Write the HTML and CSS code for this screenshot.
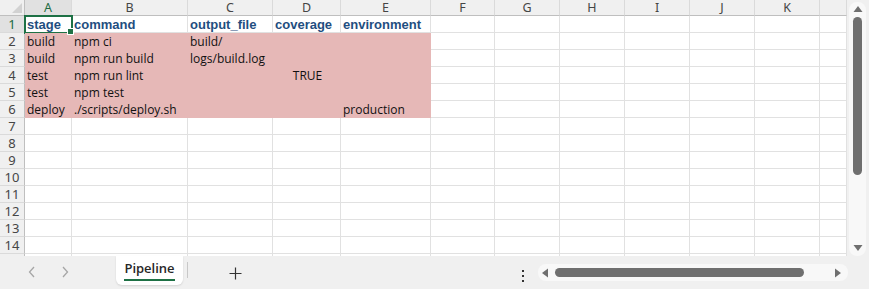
FILE: index.html
```html
<!DOCTYPE html>
<html lang="en">
<head>
    <meta charset="UTF-8">
    <title>Pipeline</title>
    <link rel="stylesheet" href="styles.css">
</head>
<body>
    <div class="sheet">
        <div class="main">
            <div class="grid">
                <!-- column headers -->
                <div class="corner"><span class="tri"></span></div>
                <div class="ch sel">A</div><div class="ch">B</div><div class="ch">C</div><div class="ch">D</div><div class="ch">E</div><div class="ch">F</div><div class="ch">G</div><div class="ch">H</div><div class="ch">I</div><div class="ch">J</div><div class="ch">K</div><div class="ch"></div>

                <div class="rh sel">1</div>
                <div class="c hd active">stage<span class="handle"></span></div><div class="c hd">command</div><div class="c hd">output_file</div><div class="c hd">coverage</div><div class="c hd">environment</div><div class="c"></div><div class="c"></div><div class="c"></div><div class="c"></div><div class="c"></div><div class="c"></div><div class="c"></div>

                <div class="rh">2</div>
                <div class="c f">build</div><div class="c f">npm ci</div><div class="c f">build/</div><div class="c f"></div><div class="c f"></div><div class="c"></div><div class="c"></div><div class="c"></div><div class="c"></div><div class="c"></div><div class="c"></div><div class="c"></div>

                <div class="rh">3</div>
                <div class="c f">build</div><div class="c f">npm run build</div><div class="c f">logs/build.log</div><div class="c f"></div><div class="c f"></div><div class="c"></div><div class="c"></div><div class="c"></div><div class="c"></div><div class="c"></div><div class="c"></div><div class="c"></div>

                <div class="rh">4</div>
                <div class="c f">test</div><div class="c f">npm run lint</div><div class="c f"></div><div class="c f bool">TRUE</div><div class="c f"></div><div class="c"></div><div class="c"></div><div class="c"></div><div class="c"></div><div class="c"></div><div class="c"></div><div class="c"></div>

                <div class="rh">5</div>
                <div class="c f">test</div><div class="c f">npm test</div><div class="c f"></div><div class="c f"></div><div class="c f"></div><div class="c"></div><div class="c"></div><div class="c"></div><div class="c"></div><div class="c"></div><div class="c"></div><div class="c"></div>

                <div class="rh">6</div>
                <div class="c f">deploy</div><div class="c f">./scripts/deploy.sh</div><div class="c f"></div><div class="c f"></div><div class="c f">production</div><div class="c"></div><div class="c"></div><div class="c"></div><div class="c"></div><div class="c"></div><div class="c"></div><div class="c"></div>

                <div class="rh">7</div>
                <div class="c"></div><div class="c"></div><div class="c"></div><div class="c"></div><div class="c"></div><div class="c"></div><div class="c"></div><div class="c"></div><div class="c"></div><div class="c"></div><div class="c"></div><div class="c"></div>
                <div class="rh">8</div>
                <div class="c"></div><div class="c"></div><div class="c"></div><div class="c"></div><div class="c"></div><div class="c"></div><div class="c"></div><div class="c"></div><div class="c"></div><div class="c"></div><div class="c"></div><div class="c"></div>
                <div class="rh">9</div>
                <div class="c"></div><div class="c"></div><div class="c"></div><div class="c"></div><div class="c"></div><div class="c"></div><div class="c"></div><div class="c"></div><div class="c"></div><div class="c"></div><div class="c"></div><div class="c"></div>
                <div class="rh">10</div>
                <div class="c"></div><div class="c"></div><div class="c"></div><div class="c"></div><div class="c"></div><div class="c"></div><div class="c"></div><div class="c"></div><div class="c"></div><div class="c"></div><div class="c"></div><div class="c"></div>
                <div class="rh">11</div>
                <div class="c"></div><div class="c"></div><div class="c"></div><div class="c"></div><div class="c"></div><div class="c"></div><div class="c"></div><div class="c"></div><div class="c"></div><div class="c"></div><div class="c"></div><div class="c"></div>
                <div class="rh">12</div>
                <div class="c"></div><div class="c"></div><div class="c"></div><div class="c"></div><div class="c"></div><div class="c"></div><div class="c"></div><div class="c"></div><div class="c"></div><div class="c"></div><div class="c"></div><div class="c"></div>
                <div class="rh">13</div>
                <div class="c"></div><div class="c"></div><div class="c"></div><div class="c"></div><div class="c"></div><div class="c"></div><div class="c"></div><div class="c"></div><div class="c"></div><div class="c"></div><div class="c"></div><div class="c"></div>
                <div class="rh">14</div>
                <div class="c"></div><div class="c"></div><div class="c"></div><div class="c"></div><div class="c"></div><div class="c"></div><div class="c"></div><div class="c"></div><div class="c"></div><div class="c"></div><div class="c"></div><div class="c"></div>
                <!-- partial row 15, cut by the tab bar -->
                <div class="rh"></div>
                <div class="c"></div><div class="c"></div><div class="c"></div><div class="c"></div><div class="c"></div><div class="c"></div><div class="c"></div><div class="c"></div><div class="c"></div><div class="c"></div><div class="c"></div><div class="c"></div>
            </div>

            <!-- vertical scrollbar -->
            <div class="vscroll">
                <div class="vtrack">
                    <svg class="arrow" width="10" height="8" viewBox="0 0 10 8"><polygon points="5,1 9.5,7 0.5,7" fill="#6f6f6f"/></svg>
                    <div class="vthumb"></div>
                    <svg class="arrow down" width="10" height="8" viewBox="0 0 10 8"><polygon points="0.5,1 9.5,1 5,7" fill="#6f6f6f"/></svg>
                </div>
            </div>
        </div>

        <!-- sheet tabs -->
        <div class="bar">
            <div class="nav">
                <svg width="10" height="14" viewBox="0 0 10 14"><polyline points="7,2 2.5,7 7,12" fill="none" stroke="#a6a6a6" stroke-width="1.3"/></svg>
                <svg width="10" height="14" viewBox="0 0 10 14"><polyline points="3,2 7.5,7 3,12" fill="none" stroke="#a6a6a6" stroke-width="1.3"/></svg>
            </div>
            <div class="tab"><span>Pipeline</span></div>
            <div class="sep"></div>
            <div class="add">
                <svg width="13" height="13" viewBox="0 0 13 13"><path d="M6.5 0.5v12M0.5 6.5h12" stroke="#333" stroke-width="1.2"/></svg>
            </div>
            <div class="more">
                <svg width="4" height="14" viewBox="0 0 4 14"><rect x="1" y="1" width="2" height="2" fill="#333"/><rect x="1" y="6" width="2" height="2" fill="#333"/><rect x="1" y="11" width="2" height="2" fill="#333"/></svg>
            </div>
            <div class="hscroll">
                <svg width="8" height="10" viewBox="0 0 8 10"><polygon points="1,5 7,0.5 7,9.5" fill="#6f6f6f"/></svg>
                <div class="hthumb"></div>
                <svg width="8" height="10" viewBox="0 0 8 10"><polygon points="1,0.5 7,5 1,9.5" fill="#6f6f6f"/></svg>
            </div>
        </div>
    </div>
</body>
</html>
```
FILE: styles.css
```css
body {
    margin: 0;
    padding: 0;
    background-color: #f0f0f0;
    font-family: "Open Sans", "Liberation Sans", sans-serif;
}
.sheet {
    width: 869px;
    height: 289px;
    display: flex;
    flex-direction: column;
    overflow: hidden;
}
.main {
    display: flex;
    height: 256px;
}
.grid {
    width: 847px;
    height: 256px;
    overflow: hidden;
    background-color: #fff;
    display: grid;
    grid-template-columns: 25px 47px 116px 85px 68px 90px 64px 65px 65px 65px 65px 65px 27px;
    grid-template-rows: 16px;
    grid-auto-rows: 17px;
}
.grid > div {
    box-sizing: border-box;
}
.corner {
    background-color: #f0f0f0;
    border-right: 1px solid #bfbfbf;
    border-bottom: 1px solid #bfbfbf;
    position: relative;
}
.tri {
    position: absolute;
    right: 2px;
    bottom: 2px;
    width: 0;
    height: 0;
    border-left: 10px solid transparent;
    border-bottom: 10px solid #d2d2d2;
}
.ch {
    background-color: #f0f0f0;
    border-right: 1px solid #dadada;
    border-bottom: 1px solid #bfbfbf;
    color: #454545;
    font-family: "Noto Sans", sans-serif;
    font-size: 12.5px;
    line-height: 16px;
    text-align: center;
}
.rh {
    background-color: #f0f0f0;
    border-right: 1px solid #bfbfbf;
    border-bottom: 1px solid #dadada;
    color: #454545;
    font-family: "Noto Sans", sans-serif;
    font-size: 13px;
    line-height: 17px;
    text-align: center;
}
.ch.sel, .rh.sel {
    background-color: #e1e1e1;
    color: #1e6b41;
}
.c {
    border-right: 1px solid #e1e1e1;
    border-bottom: 1px solid #e1e1e1;
    font-size: 12px;
    line-height: 17px;
    padding-left: 2px;
    color: #111;
    white-space: nowrap;
    position: relative;
}
.c.hd {
    font-family: "Liberation Sans", sans-serif;
    font-weight: bold;
    font-size: 13px;
    line-height: 18px;
    color: #1f4e80;
}
.c.f {
    background-color: #e6b8b7;
    border-color: #e6b8b7;
}
.c.bool {
    text-align: center;
}
.active {
    outline: 2px solid #1e7145;
    outline-offset: -1px;
}
.handle {
    position: absolute;
    right: -3px;
    bottom: -3px;
    width: 5px;
    height: 5px;
    background-color: #1e7145;
    border: 1px solid #fff;
    z-index: 2;
}
.vscroll {
    width: 22px;
    padding: 2px 3px 0 2px;
    box-sizing: border-box;
}
.vtrack {
    height: 254px;
    background-color: #f8f8f8;
    border-radius: 8px;
    display: flex;
    flex-direction: column;
    align-items: center;
}
.arrow {
    margin-top: 3px;
}
.arrow.down {
    margin-top: auto;
    margin-bottom: 4px;
}
.vthumb {
    width: 9px;
    height: 158px;
    margin-top: 4px;
    border-radius: 5px;
    background-color: #6f6f6f;
}
.bar {
    height: 33px;
    display: flex;
    align-items: flex-start;
    background-color: #f0f0f0;
}
.nav {
    width: 116px;
    display: flex;
    padding-top: 9px;
    padding-left: 27px;
    gap: 23px;
    box-sizing: border-box;
}
.tab {
    width: 67px;
    height: 29px;
    background-color: #fff;
    border-radius: 0 0 6px 6px;
    box-shadow: 0 1px 2px rgba(0, 0, 0, 0.12);
    display: flex;
    justify-content: center;
}
.tab span {
    margin-top: 4px;
    height: 19px;
    font-size: 13px;
    font-weight: 600;
    color: #262626;
    border-bottom: 2px solid #1e7145;
    line-height: 17px;
}
.sep {
    width: 1px;
    height: 16px;
    margin: 6px 0 0 4px;
    background-color: #c8c8c8;
}
.add {
    margin: 7px 0 0 41px;
}
.more {
    margin: 10px 0 0 279px;
}
.hscroll {
    margin: 8px 0 0 13px;
    width: 310px;
    height: 17px;
    border-radius: 8px;
    background-color: #f8f8f8;
    display: flex;
    align-items: center;
    padding: 0 6px 0 3px;
    box-sizing: border-box;
}
.hthumb {
    width: 250px;
    height: 9px;
    margin: 0 30px 0 6px;
    border-radius: 5px;
    background-color: #6f6f6f;
}
```
